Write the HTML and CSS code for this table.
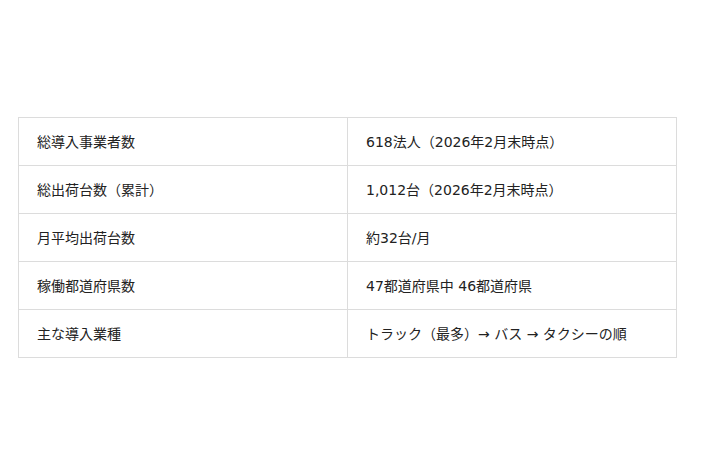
FILE: index.html
```html
<!DOCTYPE html>
<html lang="ja">
<head>
<meta charset="utf-8">
<link rel="stylesheet" href="styles.css">
</head>
<body>
<main class="page">
  <table class="facts">
    <tr><td>総導入事業者数</td><td>618法人（2026年2月末時点）</td></tr>
    <tr><td>総出荷台数（累計）</td><td>1,012台（2026年2月末時点）</td></tr>
    <tr><td>月平均出荷台数</td><td>約32台/月</td></tr>
    <tr><td>稼働都道府県数</td><td>47都道府県中 46都道府県</td></tr>
    <tr><td>主な導入業種</td><td>トラック（最多）→ バス → タクシーの順</td></tr>
  </table>
</main>
</body>
</html>
```
FILE: styles.css
```css
html, body {
  margin: 0;
  padding: 0;
  background: #ffffff;
}
.page {
  height: 474px;
  display: flex;
  align-items: center;
  padding-left: 18px;
  box-sizing: border-box;
}
.facts {
  width: 659px;
  border-collapse: collapse;
  table-layout: fixed;
  font-family: "DejaVu Sans", "Noto Sans CJK JP", sans-serif;
  font-size: 14px;
  color: #222222;
}
.facts td {
  height: 48px;
  padding: 0 18px;
  border: 1px solid #dcdcdc;
  vertical-align: middle;
  box-sizing: border-box;
}
.facts td:first-child {
  width: 50%;
}
```
